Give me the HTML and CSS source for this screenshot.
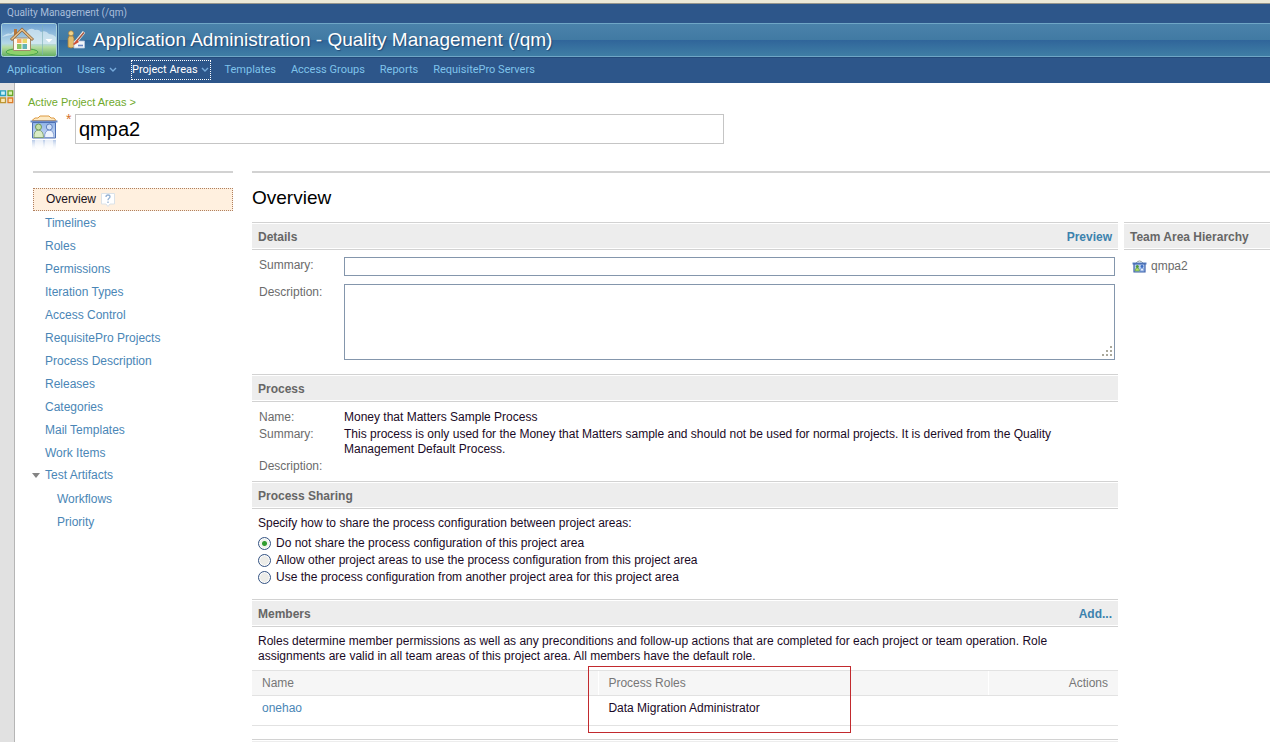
FILE: index.html
```html
<!DOCTYPE html>
<html lang="en">
<head>
<meta charset="utf-8">
<title>Application Administration - Quality Management (/qm)</title>
<link rel="stylesheet" href="styles.css">
</head>
<body>
<div class="app">
  <header class="banner">
    <div class="context">Quality Management (/qm)</div>
    <div class="title-row">
      <button class="home" type="button" aria-label="Home menu">
        <svg width="56" height="34" viewBox="0 0 56 34" aria-hidden="true">
          <defs>
            <linearGradient id="sky" x1="0" y1="0" x2="0" y2="1"><stop offset="0" stop-color="#6c9fd0"/><stop offset=".6" stop-color="#b4d8e8"/><stop offset=".72" stop-color="#b5dca0"/><stop offset="1" stop-color="#63ad62"/></linearGradient>
          </defs>
          <rect x=".5" y=".5" width="55" height="33" rx="2" fill="url(#sky)" stroke="#a9d3dc"/>
          <path d="M1 14q5-5 9-3q3-5 9-1M26 8q4-4 8-1q4-1 6 2q5-2 8 2q4 0 7 3v7H26z" fill="#dcecf3" opacity=".7"/>
          <ellipse cx="21" cy="29" rx="16" ry="3.500" fill="#8fd16b" stroke="#4aa54b"/>
          <path d="M12.500 15h17v12.500h-17z" fill="#fbf8ee" stroke="#a48b6a"/>
          <path d="M13 6h3v6h-3z" fill="#b8793f"/>
          <path d="M10 17 21 6.500 32 17" fill="none" stroke="#8c6034" stroke-width="3"/>
          <path d="M10.500 16.500 21 6.500 31.500 16.500" fill="none" stroke="#e8c38d" stroke-width="1.600"/>
          <path d="M16 16h4.500v4H16z" fill="#f6a865"/><path d="M21.500 16H26v4h-4.500z" fill="#e9d765"/>
          <path d="M16 21h4.500v5H16z" fill="#8bc560"/><path d="M21.500 21H26v5h-4.500z" fill="#63b3b5"/>
          <path d="M41.500 2v30" stroke="#7fb2b8" opacity=".6"/>
          <path d="M44.500 16h7L48 19.500z" fill="#fff"/>
        </svg>
      </button>
      <div class="title-bar">
        <svg width="20" height="20" viewBox="0 0 20 20" aria-hidden="true">
          <path d="M2 8.500 3 6h4l1 2.500V17q-3 2-6 0z" fill="#e3bd6d" stroke="#a17b3b" stroke-width=".8"/>
          <circle cx="5" cy="3.300" r="2.500" fill="#f1d48a" stroke="#a17b3b" stroke-width=".7"/>
          <path d="M8 11h10.500v7H8z" fill="#f2f5fa" stroke="#b5c4dc" stroke-width=".8"/>
          <path d="M12 15.500h5" stroke="#6a87c4" stroke-width="1.600"/>
          <path d="M9.500 12.500 18 2" stroke="#f6efe7" stroke-width="3"/>
          <path d="M10 12 18 2.500" stroke="#a2543f" stroke-width="1.400"/>
          <path d="m7 14 4-4 2 2-5 3z" fill="#cf4f37"/>
        </svg>
        <h1>Application Administration - Quality Management (/qm)</h1>
      </div>
    </div>
    <nav class="menu" aria-label="Main">
      <a href="#">Application</a>
      <a href="#">Users <svg width="8" height="6" viewBox="0 0 8 6" aria-hidden="true"><path d="m1 1 3 3 3-3"/></svg></a>
      <a href="#" class="current">Project Areas <svg width="8" height="6" viewBox="0 0 8 6" aria-hidden="true"><path d="m1 1 3 3 3-3"/></svg></a>
      <a href="#">Templates</a>
      <a href="#">Access Groups</a>
      <a href="#">Reports</a>
      <a href="#">RequisitePro Servers</a>
    </nav>
  </header>
  <div class="body">
    <div class="rail">
      <svg width="14" height="14" viewBox="0 0 14 14" aria-hidden="true">
        <path d="M.5.800H5.500V5.500H.5z" fill="#c9f1f8" stroke="#2b9fc0" stroke-width="1.300"/>
        <path d="M8 .8h4.700v4.700H8z" fill="#d9f2b4" stroke="#66a526" stroke-width="1.300"/>
        <path d="M.5 8h5v4.700h-5z" fill="#fbe9bb" stroke="#bd9632" stroke-width="1.300"/>
        <path d="M8 8h4.700v4.700H8z" fill="#ffd9a5" stroke="#dc7c27" stroke-width="1.300"/>
      </svg>
    </div>
    <main class="page">
      <div class="crumb"><a href="#">Active Project Areas &gt;</a></div>
      <div class="name-row">
        <svg class="area-icon" width="30" height="38" viewBox="0 0 30 38" aria-hidden="true">
          <defs>
            <linearGradient id="wall" x1="0" y1="0" x2="0" y2="1"><stop offset="0" stop-color="#8fb2e6"/><stop offset="1" stop-color="#cfdef6"/></linearGradient>
            <linearGradient id="fade" x1="0" y1="0" x2="0" y2="1"><stop offset="0" stop-color="#9fb8e0" stop-opacity=".75"/><stop offset="1" stop-color="#fff" stop-opacity="0"/></linearGradient>
          </defs>
          <path d="M3 6.500 6 4h3l2-2h9l2 2h3l2 2.500z" fill="#fce9c3" stroke="#dc9a43"/>
          <path d="M1.500 6.500h27v2h-27z" fill="#6d8cc8"/>
          <path d="M3.500 8.500h23v15.500h-23z" fill="url(#wall)" stroke="#4d70b5"/>
          <path d="M5 23.500q-.5-7 4.500-7.500 5 .5 5 7.500z" fill="#d9ecc6" stroke="#75985f" stroke-width=".8"/>
          <circle cx="9.500" cy="13" r="3" fill="#c4dfa9" stroke="#65924d" stroke-width=".9"/>
          <path d="M15.500 23.500q0-7 4.800-7.500 4.700.5 4.700 7.500z" fill="#eef4fd" stroke="#6e8cc5" stroke-width=".8"/>
          <circle cx="20.300" cy="13" r="3" fill="#cfdff7" stroke="#5576ba" stroke-width=".9"/>
          <path d="M3 26h24v11H3z" fill="url(#fade)"/>
          <path d="M6 26h8v7q-4 4-8 0zM16 26h8v7q-4 4-8 0z" fill="#fff" opacity=".65"/>
        </svg>
        <span class="required">*</span>
        <input class="name-input" type="text" value="qmpa2" aria-label="Project area name">
      </div>
      <div class="columns">
        <nav class="side" aria-label="Project area">
          <a href="#" class="selected">Overview
            <svg width="14" height="14" viewBox="0 0 14 14" aria-hidden="true"><path d="M.5.500h13v10.500H9l-2 2.500L5 11H.5z" fill="#fff" stroke="#dbe2e8"/><path d="M5 4q0-2 2-2t2 1.800q0 1-1.200 1.700Q7 6 7 7.200M7 8.500V10" fill="none" stroke="#94b1d3" stroke-width="1.300"/></svg>
          </a>
          <a href="#">Timelines</a>
          <a href="#">Roles</a>
          <a href="#">Permissions</a>
          <a href="#">Iteration Types</a>
          <a href="#">Access Control</a>
          <a href="#">RequisitePro Projects</a>
          <a href="#">Process Description</a>
          <a href="#">Releases</a>
          <a href="#">Categories</a>
          <a href="#">Mail Templates</a>
          <a href="#">Work Items</a>
          <a href="#" class="parent">Test Artifacts</a>
          <a href="#" class="child">Workflows</a>
          <a href="#" class="child">Priority</a>
        </nav>
        <div class="content">
          <h2 class="page-title">Overview</h2>
          <div class="panels">
            <div class="primary">
              <section class="details">
                <div class="head"><h3>Details</h3><a href="#">Preview</a></div>
                <div class="form">
                  <label for="summary">Summary:</label>
                  <input id="summary" type="text">
                  <label for="description">Description:</label>
                  <div class="area-wrap">
                    <textarea id="description"></textarea>
                    <svg class="grip" width="11" height="11" viewBox="0 0 11 11" aria-hidden="true"><path d="M8 0h2v2H8zM4 4h2v2H4zM8 4h2v2H8zM0 8h2v2H0zM4 8h2v2H4zM8 8h2v2H8z"/></svg>
                  </div>
                </div>
              </section>
              <section class="process">
                <div class="head"><h3>Process</h3></div>
                <dl>
                  <dt>Name:</dt><dd>Money that Matters Sample Process</dd>
                  <dt>Summary:</dt><dd>This process is only used for the Money that Matters sample and should not be used for normal projects. It is derived from the Quality Management Default Process.</dd>
                  <dt>Description:</dt><dd></dd>
                </dl>
              </section>
              <section class="sharing">
                <div class="head"><h3>Process Sharing</h3></div>
                <p>Specify how to share the process configuration between project areas:</p>
                <label><input type="radio" name="share" checked>Do not share the process configuration of this project area</label>
                <label><input type="radio" name="share">Allow other project areas to use the process configuration from this project area</label>
                <label><input type="radio" name="share">Use the process configuration from another project area for this project area</label>
              </section>
              <section class="members">
                <div class="head"><h3>Members</h3><a href="#">Add...</a></div>
                <p>Roles determine member permissions as well as any preconditions and follow-up actions that are completed for each project or team operation. Role assignments are valid in all team areas of this project area. All members have the default role.</p>
                <div class="table-wrap">
                  <table>
                    <thead><tr><th class="col-name">Name</th><th class="col-roles">Process Roles</th><th class="col-actions">Actions</th></tr></thead>
                    <tbody><tr><td><a href="#">onehao</a></td><td>Data Migration Administrator</td><td></td></tr></tbody>
                  </table>
                  <div class="highlight"></div>
                </div>
              </section>
              <section><div class="head"></div></section>
            </div>
            <aside class="secondary">
              <div class="head"><h3>Team Area Hierarchy</h3></div>
              <div class="team">
                <svg width="15" height="13" viewBox="0 0 15 13" aria-hidden="true">
                  <path d="M4 3q3.500-4 7 0" fill="#fff" stroke="#8d9a9f"/>
                  <path d="M.5 2.500h14v2H.5z" fill="#5b82c5"/>
                  <path d="M2 4h11v8H2z" fill="#b9d0f2" stroke="#3d60a8" stroke-width="1.200"/>
                  <circle cx="5.300" cy="6.500" r="1.500" fill="#4f9a3a"/><path d="M3 11q0-3 2.300-3t2.200 3z" fill="#b7dc69" stroke="#4f9a3a" stroke-width=".6"/>
                  <circle cx="10" cy="6.500" r="1.400" fill="#3f6fc4"/><path d="M8 11q0-3 2-3t2.200 3z" fill="#e7effb" stroke="#3f6fc4" stroke-width=".6"/>
                </svg>
                <span>qmpa2</span>
              </div>
            </aside>
          </div>
        </div>
      </div>
    </main>
  </div>
</div>
</body>
</html>
```
FILE: styles.css
```css
* { box-sizing: border-box; }
body {
  margin: 0;
  background: #fff;
  color: #1a0a26;
  font: 12px/15px "Liberation Sans", Arial, sans-serif;
}
a { color: #4a86b6; text-decoration: none; }
h1, h2, h3, p, dl, dd { margin: 0; }
.app { display: flex; flex-direction: column; height: 100vh; overflow: hidden; }

.banner { flex: none; background: #2d568a; border-top: 3px solid #ece9d8; box-shadow: inset 0 1px #96958c; }
.context { height: 20px; padding: 2px 7px; color: #a9bedb; font: 10px/16px Roboto, Tahoma, sans-serif; }
.title-row { display: flex; height: 34px; gap: 1px; }
.home { flex: none; width: 56px; height: 34px; margin-left: 1px; padding: 0; border: 0; background: none; }
.home svg { display: block; }
.title-bar {
  flex: 1;
  display: flex;
  align-items: center;
  gap: 7px;
  padding-left: 7px;
  border: 1px solid #6fa6c6;
  border-right: 0;
  background: linear-gradient(#4a82aa, #417aa3 50%, #30659a 50%, #3f7ea5);
}
.title-bar h1 { color: #fff; font-size: 19px; line-height: 24px; font-weight: 400; text-shadow: 1px 1px 1px #244b75; }
.menu { display: flex; align-items: center; gap: 15px; height: 26px; padding: 0 7px 1px; font: 11px/18px Roboto, Tahoma, sans-serif; border-top: 1px solid #234a7b; }
.menu a { color: #7fc3ea; white-space: nowrap; }
.menu .current { margin: 0 -2px; border: 1px dotted #fff; color: #fff; }
.menu svg { margin: 0 1px; }
.menu svg path { fill: none; stroke: #78abdc; stroke-width: 1.4; }

.body { flex: 1; display: flex; min-height: 0; }
.rail { flex: none; width: 15px; padding-top: 7px; background: #e1e1e1; border-right: 1px solid #b5b5b5; }
.page { flex: 1; min-width: 0; padding: 12px 0 0 18px; }
.crumb { margin-left: -5px; height: 15px; font-size: 11px; }
.crumb a { color: #6fa92c; }
.name-row { display: flex; margin: 4px 0 0 -4px; height: 38px; }
.area-icon { flex: none; }
.required { width: 16px; padding: 0 3px 0 7px; color: #d4702a; font-size: 14px; line-height: 11px; }
.name-input { width: 649px; max-width: 100%; height: 30px; padding: 0 3px; border: 1px solid #c5c5c5; color: #000; font: 20px "Liberation Sans", Arial, sans-serif; }

.columns { display: flex; gap: 19px; margin-top: 19px; }
.side { flex: none; width: 200px; padding-top: 15px; border-top: 2px solid #d2d2d2; }
.side a { display: block; height: 23px; padding-left: 12px; line-height: 25px; }
.side .selected { display: flex; align-items: center; gap: 5px; border: 1px dotted #b08060; background: #fff0df; color: #1a1020; line-height: 21px; }
.side .parent { display: flex; align-items: center; gap: 5px; padding-left: 0; }
.side .parent::before { content: ""; margin-left: -1px; border: 4px solid transparent; border-top: 5px solid #848484; border-bottom: 0; }
.side .child { padding-left: 24px; }

.content { flex: 1; min-width: 0; border-top: 2px solid #d2d2d2; }
.page-title { padding: 13px 0 12px; color: #000; font-size: 19px; line-height: 24px; font-weight: 400; }
.panels { display: grid; grid-template-columns: 1fr 146px; gap: 6px; }
.head {
  display: flex;
  justify-content: space-between;
  height: 28px;
  padding: 0 6px;
  border: solid #d2d2d2;
  border-width: 1px 0;
  background: #ededed;
  box-shadow: inset 0 1px #fff, inset 0 -1px #fff;
  font-weight: 700;
  line-height: 28px;
}
.head h3 { color: #666; font-size: 12px; }
.head a { color: #3c82ad; }

.form { display: grid; grid-template-columns: 85px 1fr; row-gap: 8px; padding: 7px 3px 14px 7px; color: #6b6b6b; }
.form label { line-height: 17px; }
.form input { height: 19px; border: 1px solid #8496ac; }
.form textarea { display: block; width: 100%; height: 76px; border: 1px solid #8496ac; resize: none; }
.area-wrap { position: relative; }
.grip { position: absolute; right: 2px; bottom: 3px; fill: #aaa89a; }

.process dl { display: grid; grid-template-columns: 85px 1fr; row-gap: 2px; padding: 8px 40px 7px 7px; }
.process dt { color: #6b6b6b; }
.sharing p { padding: 7px 6px 4px; }
.sharing label { display: flex; align-items: center; gap: 5px; height: 17px; padding-left: 6px; }
.sharing label:last-child { margin-bottom: 13px; }
.sharing input { appearance: none; width: 13px; height: 13px; margin: 0; border: 1px solid #345383; border-radius: 50%; background: #ecece8; box-shadow: inset 0 0 0 1px #fff; }
.sharing input:checked { background: radial-gradient(circle, #2f9d2f 0 2px, #eef3ec 3px); }

.members p { padding: 7px 36px 6px 6px; }
.table-wrap { position: relative; margin-bottom: 13px; }
table { width: 100%; border-collapse: collapse; table-layout: fixed; }
th, td { padding: 0 10px; text-align: left; border: solid #e2e2e2; border-width: 1px 0; }
th { height: 25px; background: #f6f6f6; color: #777; font-weight: 400; }
th + th { box-shadow: inset 1px 0 #fff; }
td { height: 30px; padding-bottom: 5px; }
.col-name { width: 40%; }
.col-roles { width: 45%; }
.col-actions { text-align: right; }
.highlight { position: absolute; left: 336px; top: -4px; width: 263px; height: 67px; border: 1px solid #c22a2e; pointer-events: none; }
.team { display: flex; align-items: center; gap: 4px; padding: 9px 8px; color: #6b6b6b; }
```
